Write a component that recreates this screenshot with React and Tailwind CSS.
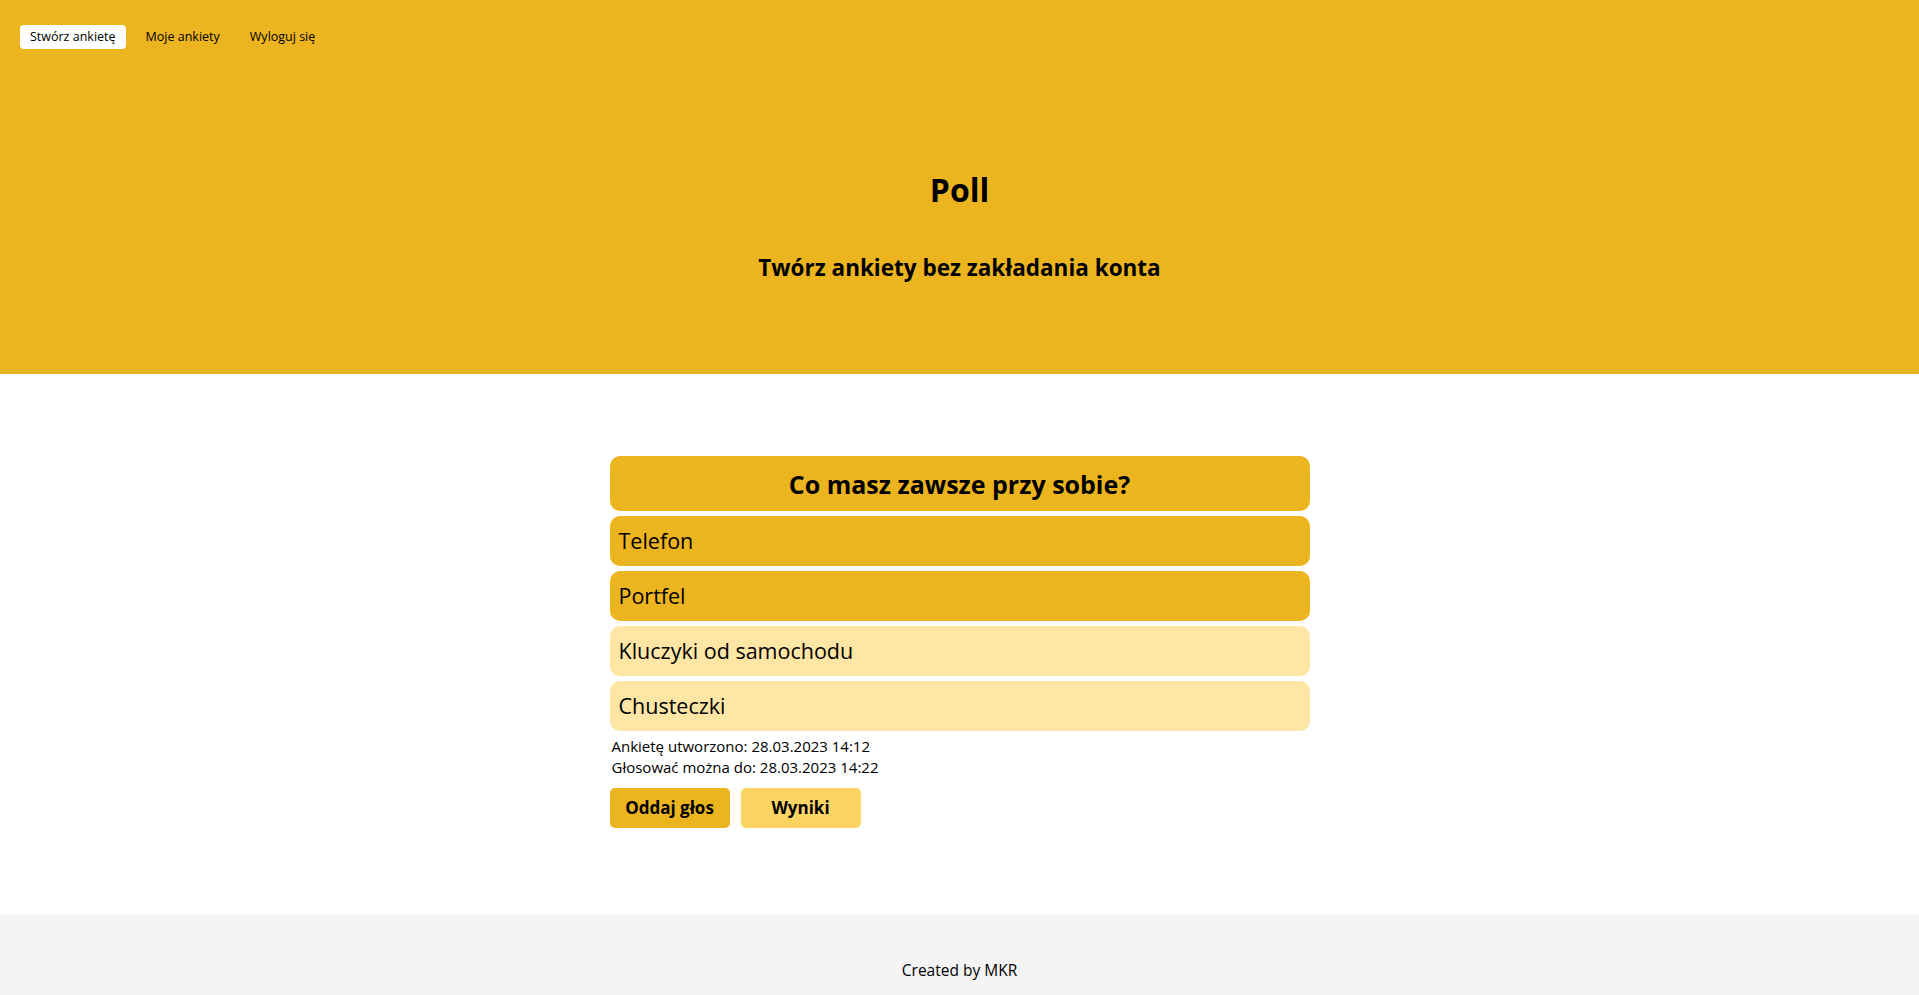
import { useState } from "react";

const OPTIONS = [
  { label: "Telefon", selected: true },
  { label: "Portfel", selected: true },
  { label: "Kluczyki od samochodu", selected: false },
  { label: "Chusteczki", selected: false },
];

const NavItem = ({ children, active }) => (
  <a
    href="#"
    className={`h-[24px] px-[10px] rounded-[4px] text-[12.5px] leading-[24px] text-black ${
      active ? "bg-white" : ""
    }`}
  >
    {children}
  </a>
);

export default function App() {
  const [options, setOptions] = useState(OPTIONS);

  const toggle = (i) =>
    setOptions((p) => p.map((o, j) => (j === i ? { ...o, selected: !o.selected } : o)));

  return (
    <div className="min-h-screen flex flex-col bg-white text-black font-['Open_Sans',sans-serif]">
      {/* HEADER */}
      <header className="bg-[#ECB41E] h-[374px]">
        <nav className="flex gap-[10px] pt-[25px] pl-[20px]">
          <NavItem active>Stwórz ankietę</NavItem>
          <NavItem>Moje ankiety</NavItem>
          <NavItem>Wyloguj się</NavItem>
        </nav>
        <h1 className="mt-[122px] text-center text-[32px] leading-[38px] font-bold">Poll</h1>
        <h2 className="mt-[44px] text-center text-[22.5px] leading-[29px] font-bold">
          Twórz ankiety bez zakładania konta
        </h2>
      </header>

      {/* POLL */}
      <main className="flex-1 pt-[82px] pb-[87px]">
        <div className="w-[700px] mx-auto flex flex-col gap-[5px]">
          <div className="h-[55px] rounded-[10px] bg-[#ECB41E] flex items-center justify-center">
            <h3 className="text-[25px] font-bold pt-[2px]">Co masz zawsze przy sobie?</h3>
          </div>

          {options.map((o, i) => (
            <button
              key={o.label}
              onClick={() => toggle(i)}
              className={`h-[50px] rounded-[10px] px-[9px] text-left text-[21.5px] ${
                o.selected ? "bg-[#ECB41E]" : "bg-[#FFE6A5]"
              }`}
            >
              {o.label}
            </button>
          ))}

          <div className="pl-[2px] text-[15px] leading-[21px]">
            <div>Ankietę utworzono: 28.03.2023 14:12</div>
            <div>Głosować można do: 28.03.2023 14:22</div>
          </div>

          <div className="flex gap-[11px] mt-[5px]">
            <button className="w-[120px] h-[40px] rounded-[5px] bg-[#ECB41E] text-[17px] font-bold">
              Oddaj głos
            </button>
            <button className="w-[120px] h-[40px] rounded-[5px] bg-[#FCD462] text-[17px] font-bold">
              Wyniki
            </button>
          </div>
        </div>
      </main>

      {/* FOOTER */}
      <footer className="bg-[#F4F4F4] pt-[45px] pb-[44px] text-center text-[15.5px] leading-[21px]">
        Created by MKR
      </footer>
    </div>
  );
}
